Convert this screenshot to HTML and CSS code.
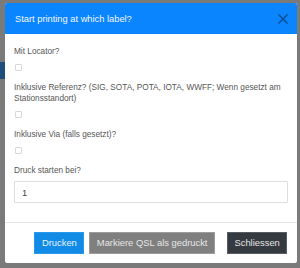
FILE: index.html
```html
<!DOCTYPE html>
<html lang="de">

<head>
    <meta charset="UTF-8">
    <meta name="viewport" content="width=device-width, initial-scale=1.0">
    <title>Label Druck</title>

    <link rel="stylesheet" href="styles.css">
</head>

<body>
    <!-- page behind the backdrop, only its edges show -->
    <div class="page">
        <div class="page_btn"></div>
    </div>

    <div class="modal">
        <div class="modal_header">
            <h4 class="modal_title">Start printing at which label?</h4>
            <button type="button" class="close_btn" aria-label="Close">
                <svg width="10" height="10" viewBox="0 0 10 10">
                    <path d="M0.5 0.5 L9.5 9.5 M9.5 0.5 L0.5 9.5" />
                </svg>
            </button>
        </div>

        <form class="modal_body" name="printForm">
            <div class="form_group">
                <label for="locator" class="field_label">Mit Locator?</label>
                <input type="checkbox" class="check" id="locator" name="locator">
            </div>

            <div class="form_group">
                <label for="reference" class="field_label">Inklusive Referenz? (SIG, SOTA, POTA, IOTA, WWFF; Wenn gesetzt am Stationsstandort)</label>
                <input type="checkbox" class="check" id="reference" name="reference">
            </div>

            <div class="form_group">
                <label for="via" class="field_label">Inklusive Via (falls gesetzt)?</label>
                <input type="checkbox" class="check" id="via" name="via">
            </div>

            <div class="form_group last_group">
                <label for="startat" class="field_label">Druck starten bei?</label>
                <input type="text" class="text_input" id="startat" name="startat" value="1">
            </div>
        </form>

        <div class="modal_footer">
            <button type="button" class="btn btn_primary">Drucken</button>
            <button type="button" class="btn btn_secondary">Markiere QSL als gedruckt</button>
            <button type="button" class="btn btn_dark">Schliessen</button>
        </div>
    </div>
</body>

</html>
```

FILE: styles.css
```css
body {
    position: relative;
    margin: 0;
    width: 300px;
    height: 268px;
    overflow: hidden;
    background: #7a7a7a;
    font-family: "Liberation Sans", Arial, sans-serif;
}

.page {
    padding-top: 62px;
}

.page_btn {
    width: 5px;
    height: 17px;
    background: #1d4f7a;
}

.modal {
    position: absolute;
    top: 3px;
    left: 5px;
    width: 292px;
    background: #ffffff;
    border-radius: 2px;
    overflow: hidden;
}

.modal_header {
    display: flex;
    align-items: center;
    justify-content: space-between;
    height: 31px;
    padding: 0 9px 0 10px;
    background: #0a85fe;
}

.modal_title {
    margin: 0;
    font-size: 9.3px;
    font-weight: normal;
    color: #f2f6ff;
}

.close_btn {
    display: flex;
    width: 10px;
    height: 10px;
    padding: 0;
    border: none;
    background: transparent;
    cursor: pointer;
}

.close_btn path {
    stroke: #0b4b8a;
    stroke-width: 1.3;
    fill: none;
}

.modal_body {
    padding: 13px 9px 19px 9px;
    margin: 0;
}

.form_group {
    margin-bottom: 11.8px;
}

.last_group {
    margin-bottom: 0;
}

.field_label {
    display: block;
    font-size: 8.25px;
    line-height: 10.7px;
    color: #565656;
    margin-bottom: 6.5px;
}

.last_group .field_label {
    margin-bottom: 4.7px;
}

.check {
    appearance: none;
    display: block;
    box-sizing: border-box;
    width: 7px;
    height: 7px;
    margin: 0 0 0 1px;
    border: 1px solid #d8d8d8;
    border-radius: 1px;
    background: #ffffff;
}

.text_input {
    display: block;
    box-sizing: border-box;
    width: 100%;
    height: 22px;
    margin: 0;
    padding: 0 7px;
    border: 1px solid #dddddd;
    border-radius: 1px;
    outline: none;
    font-family: inherit;
    font-size: 9.4px;
    color: #444444;
}

.modal_footer {
    display: flex;
    justify-content: flex-end;
    padding: 9px 9.7px 9px;
    border-top: 1px solid #e5e5e5;
}

.btn {
    padding: 3px 6.5px;
    border: 1px solid transparent;
    border-radius: 0;
    font-family: inherit;
    font-size: 9.4px;
    line-height: 14px;
    cursor: pointer;
}

.btn + .btn {
    margin-left: 5px;
}

.btn_primary {
    background: #118be6;
    border-color: #2b98ea;
    color: #e8f3ff;
}

.btn_secondary {
    background: #7f7f7f;
    border-color: #9c9c9c;
    color: #e6e6e6;
}

.btn_dark {
    margin-left: 12px !important;
    background: #343a3f;
    border-color: #575c61;
    color: #e4e4e4;
}
```
